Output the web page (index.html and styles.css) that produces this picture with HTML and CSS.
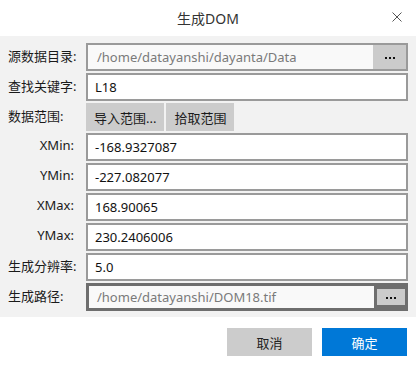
FILE: index.html
```html
<!DOCTYPE html>
<html lang="zh-CN">
    <head>
        <meta charset="UTF-8" />
        <meta name="viewport" content="width=device-width, initial-scale=1.0" />
        <title>生成DOM</title>
        <link rel="stylesheet" href="styles.css">
    </head>
    <body>
        <div class="dialog">
            <div class="titlebar">
                <span class="title">生成DOM</span>
                <svg class="close" width="10" height="10" viewBox="0 0 10 10">
                    <path d="M0.5 0.5 L9.5 9.5 M9.5 0.5 L0.5 9.5" stroke="#555" stroke-width="1" fill="none" />
                </svg>
            </div>

            <div class="form">
                <label class="label">源数据目录:</label>
                <div class="field path-field disabled">
                    <span class="path-text">/home/datayanshi/dayanta/Data</span>
                    <button class="browse-btn"><span class="dots"></span></button>
                </div>

                <label class="label">查找关键字:</label>
                <input class="field text-input" type="text" value="L18" />

                <label class="label">数据范围:</label>
                <div class="range-btns">
                    <button class="gray-btn">导入范围...</button>
                    <button class="gray-btn">拾取范围</button>
                </div>

                <label class="label right">XMin:</label>
                <input class="field text-input" type="text" value="-168.9327087" />

                <label class="label right">YMin:</label>
                <input class="field text-input" type="text" value="-227.082077" />

                <label class="label right">XMax:</label>
                <input class="field text-input" type="text" value="168.90065" />

                <label class="label right">YMax:</label>
                <input class="field text-input" type="text" value="230.2406006" />

                <label class="label">生成分辨率:</label>
                <input class="field text-input" type="text" value="5.0" />

                <label class="label">生成路径:</label>
                <div class="field path-field focused">
                    <span class="path-text">/home/datayanshi/DOM18.tif</span>
                    <button class="browse-btn"><span class="dots"></span></button>
                </div>
            </div>

            <div class="footer">
                <button class="btn cancel-btn">取消</button>
                <button class="btn ok-btn">确定</button>
            </div>
        </div>
    </body>
</html>
```

FILE: styles.css
```css
body {
    margin: 0;
    font-family: "Noto Sans", "Noto Sans CJK SC", sans-serif;
    font-size: 13px;
    color: #1a1a1a;
    background: white;
}
.dialog {
    width: 416px;
    height: 365px;
    display: flex;
    flex-direction: column;
}
.titlebar {
    height: 36px;
    position: relative;
    display: flex;
    align-items: center;
    justify-content: center;
    background: white;
}
.title {
    font-size: 14px;
    color: #333;
}
.close {
    position: absolute;
    right: 14px;
    top: 12px;
}
.form {
    background: #f2f2f2;
    padding: 7px 8px 6px 8px;
    display: grid;
    grid-template-columns: 70px 322px;
    column-gap: 8px;
    row-gap: 2px;
    grid-auto-rows: 28px;
}
.label {
    align-self: center;
    margin-top: -4px;
    white-space: nowrap;
}
.label.right {
    text-align: right;
    padding-right: 4px;
}
.field {
    box-sizing: border-box;
    height: 28px;
    border: 2px solid #9a9a9a;
    background: white;
}
.text-input {
    width: 322px;
    padding: 0 0 0 7px;
    font-family: inherit;
    font-size: 13px;
    color: #111;
    outline: none;
}
.path-field {
    display: flex;
    align-items: stretch;
    background: #f9f9f9;
}
.path-field.focused {
    border: 3px solid #6e6e6e;
}
.path-text {
    flex: 1;
    padding-left: 9px;
    color: #7a7a7a;
    display: flex;
    align-items: center;
    overflow: hidden;
    white-space: nowrap;
}
.focused .path-text {
    padding-left: 8px;
}
.browse-btn {
    width: 33px;
    border: none;
    background: #cbcbcb;
    padding: 0;
    display: flex;
    align-items: center;
    justify-content: center;
}
.focused .browse-btn {
    width: 31px;
    border: 3px solid #6e6e6e;
    border-right: none;
}
.dots {
    width: 2px;
    height: 2px;
    background: #111;
    box-shadow: -4px 0 0 #111, 4px 0 0 #111;
    margin-top: 1px;
}
.range-btns {
    display: flex;
    gap: 2px;
}
.gray-btn {
    border: none;
    background: #cccccc;
    font-family: inherit;
    font-size: 13px;
    color: #1a1a1a;
    padding: 0 8px;
    white-space: nowrap;
}
.footer {
    flex: 1;
    display: flex;
    justify-content: flex-end;
    align-items: flex-start;
    gap: 10px;
    padding: 11px 9px 0 0;
}
.btn {
    width: 85px;
    height: 28px;
    border: none;
    font-family: inherit;
    font-size: 13px;
}
.cancel-btn {
    background: #cccccc;
    color: #222;
}
.ok-btn {
    background: #0078d7;
    color: white;
}
```
